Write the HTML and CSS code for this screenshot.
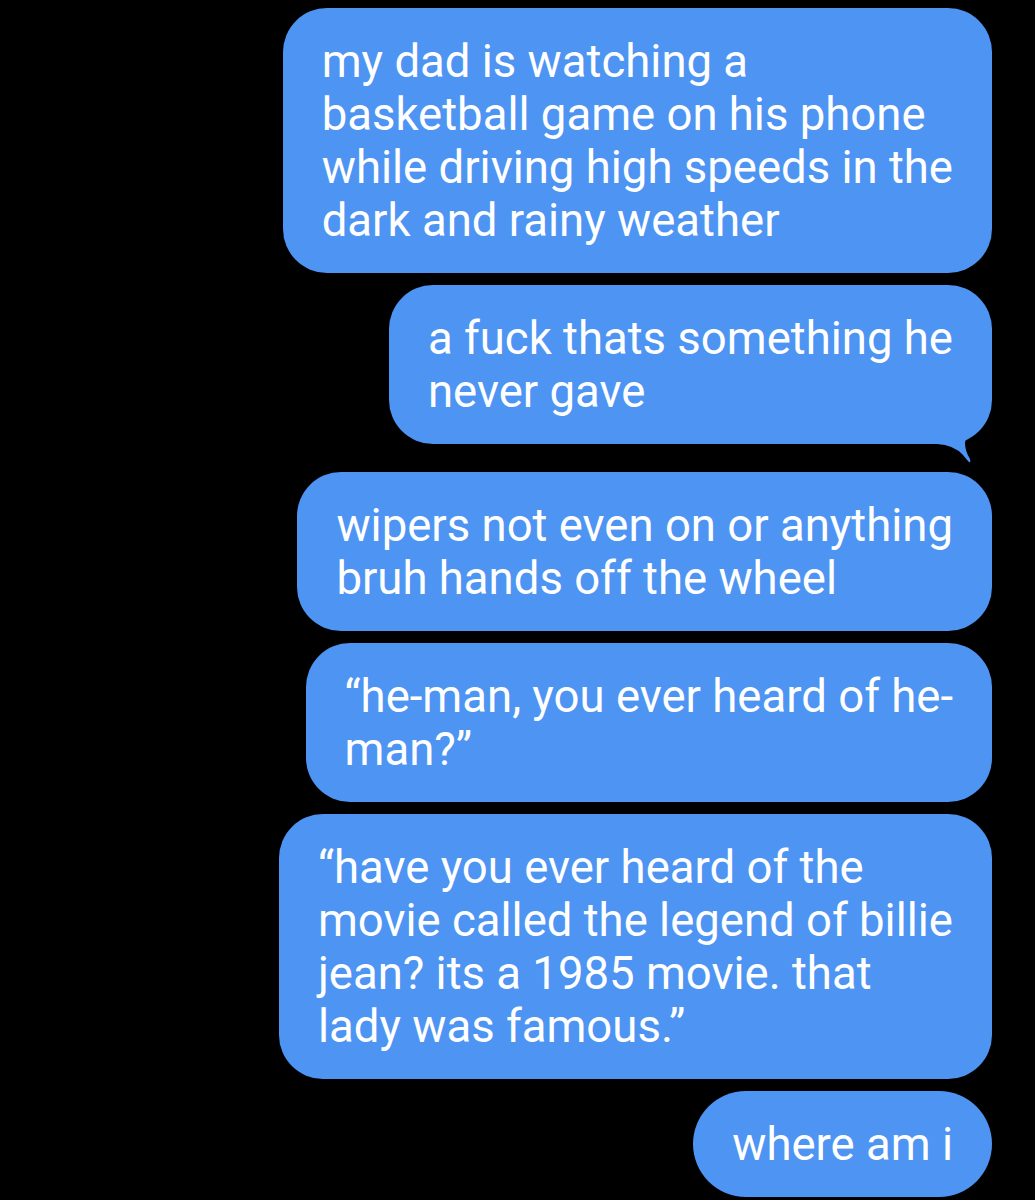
FILE: index.html
```html
<!DOCTYPE html>
<html lang="en">
<head>
    <meta charset="UTF-8">
    <meta name="viewport" content="width=device-width, initial-scale=1.0">
    <title>Messages</title>
    <link rel="stylesheet" href="styles.css">
</head>
<body>
    <div class="thread">
        <div class="bubble">my dad is watching a<br>basketball game on his phone<br>while driving high speeds in the<br>dark and rainy weather</div>

        <div class="bubble has-tail">a fuck thats something he<br>never gave
            <svg class="tail" viewBox="0 0 52 64" width="52" height="64" aria-hidden="true">
                <path d="M-3 45 Q14 46 23 56 Q27 61 29 63 Q31 64 30 60 Q25 52 25 44 Q26 33 41 27 L0 28 Z" />
            </svg>
        </div>

        <div class="bubble">wipers not even on or anything<br>bruh hands off the wheel</div>

        <div class="bubble">“he-man, you ever heard of he-<br>man?”</div>

        <div class="bubble">“have you ever heard of the<br>movie called the legend of billie<br>jean? its a 1985 movie. that<br>lady was famous.”</div>

        <div class="bubble pill">where am i</div>
    </div>
</body>
</html>
```

FILE: styles.css
```css
body, html {
    margin: 0;
    padding: 0;
    background-color: #000;
    font-family: 'Roboto', 'Liberation Sans', sans-serif;
    color: #fff;
}

.thread {
    display: flex;
    flex-direction: column;
    align-items: flex-end;
    gap: 12px;
    padding: 8px 43px 20px 0;
}

.bubble {
    position: relative;
    background-color: #4d94f3;
    color: #fff;
    font-size: 45.5px;
    line-height: 53px;
    padding: 27px 39px 26px 39px;
    border-radius: 44px;
    white-space: nowrap;
}

.has-tail {
    margin-bottom: 16px;
}

.tail {
    position: absolute;
    right: 0;
    bottom: -19px;
    overflow: visible;
    fill: #4d94f3;
}

.pill {
    border-radius: 53px;
}
```
